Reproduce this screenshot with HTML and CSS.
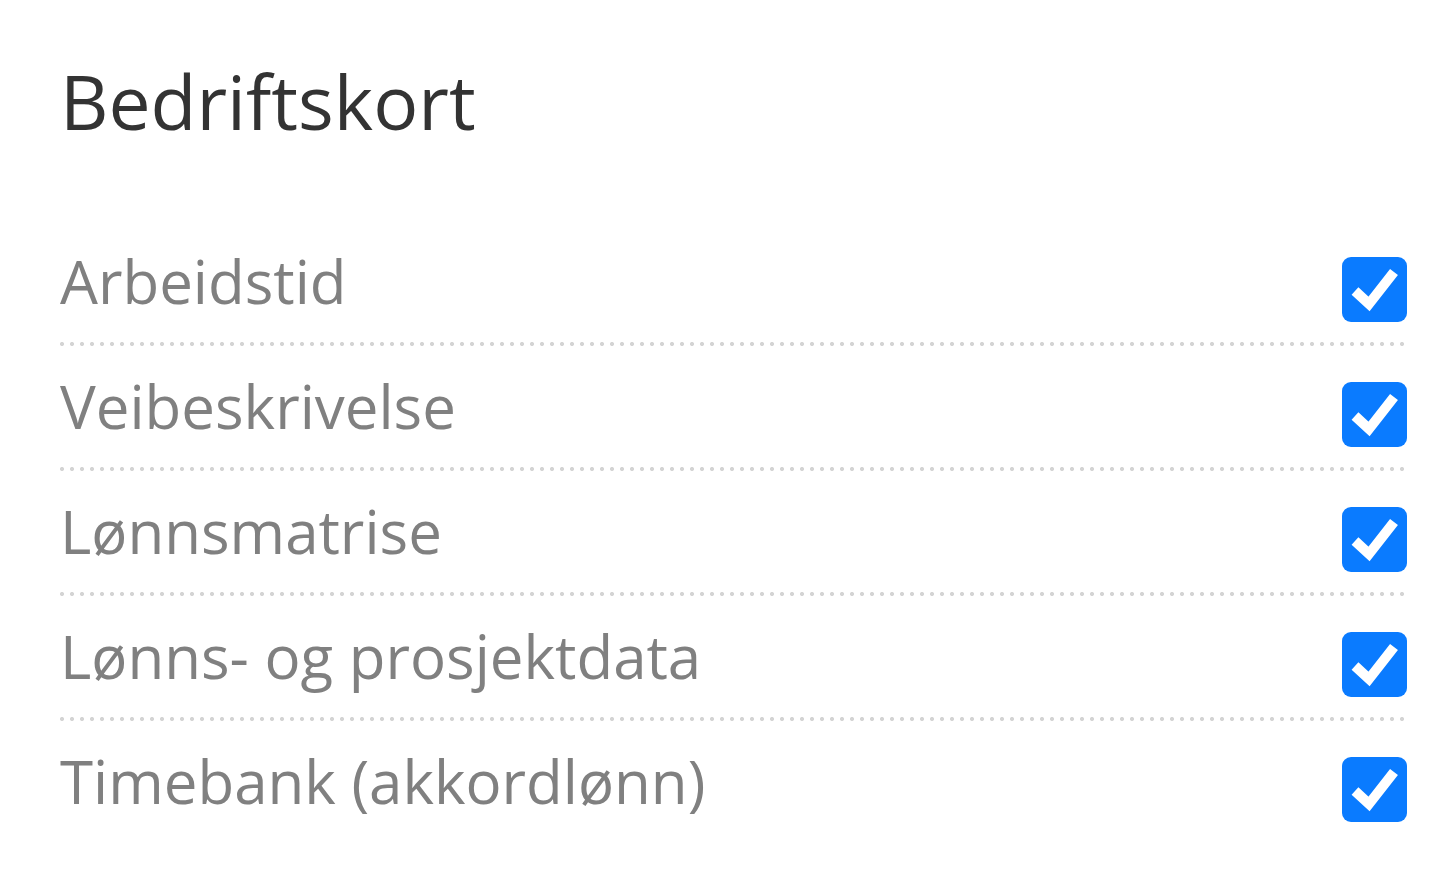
FILE: index.html
```html
<!DOCTYPE html>
<html lang="no">
<head>
<meta charset="utf-8">
<title>Bedriftskort</title>
<link rel="stylesheet" href="styles.css">
</head>
<body>
<main class="page">
  <h1 class="title">Bedriftskort</h1>
  <ul class="list">
    <li class="row"><span class="label">Arbeidstid</span><span class="check"><svg viewBox="0 0 65 65" width="65" height="65"><rect width="65" height="65" rx="9" fill="#0a7bff"/><polyline points="13,34 27,47 52,15" fill="none" stroke="#fff" stroke-width="10"/></svg></span></li>
    <li class="row"><span class="label">Veibeskrivelse</span><span class="check"><svg viewBox="0 0 65 65" width="65" height="65"><rect width="65" height="65" rx="9" fill="#0a7bff"/><polyline points="13,34 27,47 52,15" fill="none" stroke="#fff" stroke-width="10"/></svg></span></li>
    <li class="row"><span class="label">Lønnsmatrise</span><span class="check"><svg viewBox="0 0 65 65" width="65" height="65"><rect width="65" height="65" rx="9" fill="#0a7bff"/><polyline points="13,34 27,47 52,15" fill="none" stroke="#fff" stroke-width="10"/></svg></span></li>
    <li class="row"><span class="label">Lønns- og prosjektdata</span><span class="check"><svg viewBox="0 0 65 65" width="65" height="65"><rect width="65" height="65" rx="9" fill="#0a7bff"/><polyline points="13,34 27,47 52,15" fill="none" stroke="#fff" stroke-width="10"/></svg></span></li>
    <li class="row"><span class="label">Timebank (akkordlønn)</span><span class="check"><svg viewBox="0 0 65 65" width="65" height="65"><rect width="65" height="65" rx="9" fill="#0a7bff"/><polyline points="13,34 27,47 52,15" fill="none" stroke="#fff" stroke-width="10"/></svg></span></li>
  </ul>
</main>
</body>
</html>
```
FILE: styles.css
```css
html, body {
  margin: 0;
  padding: 0;
  background: #ffffff;
}

body {
  font-family: "Open Sans", "Noto Sans", sans-serif;
}

.page {
  padding: 50px 29px 0 60px;
}

.title {
  margin: 0;
  font-size: 75px;
  font-weight: 400;
  color: #333333;
  line-height: 102px;
}

.list {
  list-style: none;
  margin: 69px 0 0 0;
  padding: 0;
}

.row {
  display: flex;
  align-items: center;
  justify-content: space-between;
  padding: 36px 0 24px 0;
  background-image: radial-gradient(circle at 2px 2px, #d4d4d4 1.8px, rgba(212, 212, 212, 0) 2.3px);
  background-size: 10px 4px;
  background-repeat: repeat-x;
  background-position: left bottom;
}

.row:last-child {
  background: none;
}

.label {
  font-size: 60px;
  color: #808080;
  line-height: 65px;
  margin-top: -17px;
  white-space: nowrap;
}

.check {
  display: block;
  width: 65px;
  height: 65px;
  flex: none;
}

.check svg {
  display: block;
}
```
